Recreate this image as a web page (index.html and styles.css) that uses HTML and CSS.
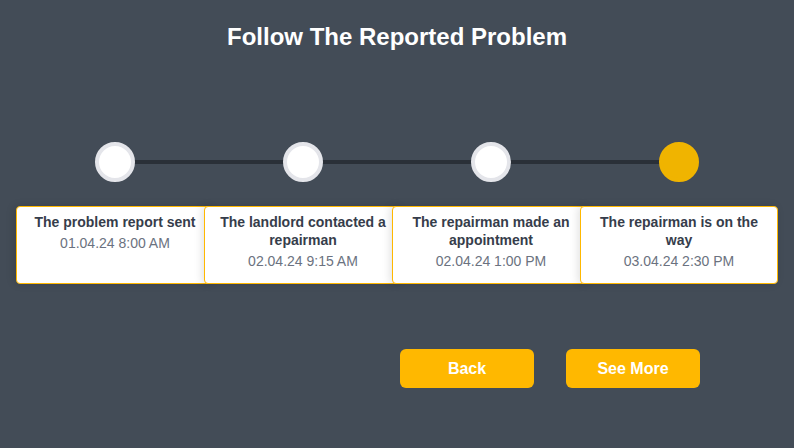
FILE: index.html
```html
<!DOCTYPE html>
<html lang="en">
<head>
<meta charset="utf-8">
<title>Follow The Reported Problem</title>
<link rel="stylesheet" href="styles.css">
</head>
<body>
<main class="page">
  <h1 class="title">Follow The Reported Problem</h1>
  <ol class="steps">
    <li class="step">
      <div class="marker"><span class="dot"></span></div>
      <div class="card">
        <div class="card-title">The problem report sent</div>
        <div class="card-date">01.04.24 8:00 AM</div>
      </div>
    </li>
    <li class="step">
      <div class="marker linked"><span class="dot"></span></div>
      <div class="card">
        <div class="card-title">The landlord contacted a repairman</div>
        <div class="card-date">02.04.24 9:15 AM</div>
      </div>
    </li>
    <li class="step">
      <div class="marker linked"><span class="dot"></span></div>
      <div class="card">
        <div class="card-title">The repairman made an appointment</div>
        <div class="card-date">02.04.24 1:00 PM</div>
      </div>
    </li>
    <li class="step">
      <div class="marker linked"><span class="dot dot-active"></span></div>
      <div class="card">
        <div class="card-title">The repairman is on the way</div>
        <div class="card-date">03.04.24 2:30 PM</div>
      </div>
    </li>
  </ol>
  <div class="actions">
    <button class="btn" type="button">Back</button>
    <button class="btn" type="button">See More</button>
  </div>
</main>
</body>
</html>
```
FILE: styles.css
```css
* { box-sizing: border-box; }
html, body {
  margin: 0;
  padding: 0;
  background: #434c57;
  font-family: "Liberation Sans", Arial, sans-serif;
}
.page {
  width: 794px;
  height: 448px;
  padding-top: 23px;
}
.title {
  margin: 0;
  text-align: center;
  color: #ffffff;
  font-size: 24px;
  line-height: 28px;
  font-weight: 700;
}
.steps {
  list-style: none;
  margin: 91px 0 0 0;
  padding: 0 0 0 16px;
  display: flex;
  align-items: stretch;
}
.step {
  width: 198px;
  flex: 0 0 198px;
  display: flex;
  flex-direction: column;
}
.step + .step { margin-left: -10px; }
.marker {
  position: relative;
  height: 40px;
  display: flex;
  justify-content: center;
}
.marker.linked::before {
  content: "";
  position: absolute;
  top: 18px;
  right: 50%;
  width: 188px;
  height: 4px;
  background: #2a3038;
  z-index: 0;
}
.dot {
  position: relative;
  z-index: 1;
  width: 40px;
  height: 40px;
  border-radius: 50%;
  background: #ffffff;
  border: 4px solid #e4e5ea;
}
.dot-active {
  background: #f0b400;
  border-color: #f0b400;
}
.card {
  position: relative;
  margin-top: 24px;
  flex: 1;
  min-height: 78px;
  background: #ffffff;
  border: 1px solid #ffb800;
  border-radius: 4px;
  box-shadow: -2px 0 8px rgba(0, 0, 0, 0.12);
  padding: 6px 10px 8px;
  text-align: center;
}
.card-title {
  color: #363d4b;
  font-size: 14px;
  line-height: 18px;
  font-weight: 700;
}
.card-date {
  margin-top: 3px;
  color: #6b7280;
  font-size: 14px;
  line-height: 18px;
}
.actions {
  display: flex;
  justify-content: flex-end;
  gap: 32px;
  padding-right: 94px;
  margin-top: 65px;
}
.btn {
  width: 134px;
  height: 39px;
  border: none;
  border-radius: 6px;
  background: #ffb800;
  color: #ffffff;
  font-family: "Liberation Sans", Arial, sans-serif;
  font-size: 16px;
  font-weight: 700;
  cursor: pointer;
}
```
